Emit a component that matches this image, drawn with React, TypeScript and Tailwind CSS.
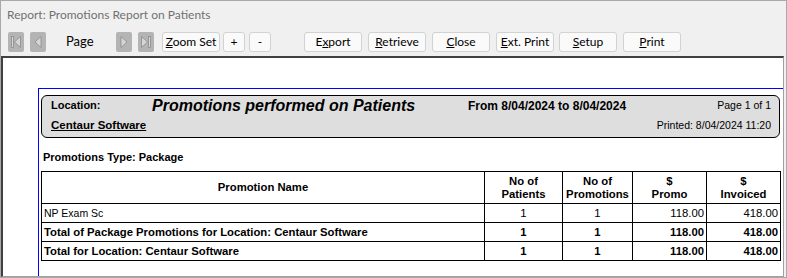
import React from "react";

type NavKind = "first" | "prev" | "next" | "last";

const NavButton = ({ kind }: { kind: NavKind }) => {
  return (
    <svg width="16" height="20" viewBox="0 0 16 20" className="block">
      <rect x="0" y="0" width="16" height="20" rx="2" fill="#b4b4b4" />
      {kind === "first" && (
        <g fill="#d6d6d6" stroke="#8c8c8c" strokeWidth="0.8">
          <rect x="3.5" y="4.5" width="2" height="11" />
          <path d="M12.5 4.5 L6.5 10 L12.5 15.5 Z" />
        </g>
      )}
      {kind === "prev" && (
        <g fill="#d6d6d6" stroke="#8c8c8c" strokeWidth="0.8">
          <path d="M11 4.5 L5 10 L11 15.5 Z" />
        </g>
      )}
      {kind === "next" && (
        <g fill="#d6d6d6" stroke="#8c8c8c" strokeWidth="0.8">
          <path d="M5 4.5 L11 10 L5 15.5 Z" />
        </g>
      )}
      {kind === "last" && (
        <g fill="#d6d6d6" stroke="#8c8c8c" strokeWidth="0.8">
          <path d="M3.5 4.5 L9.5 10 L3.5 15.5 Z" />
          <rect x="10.5" y="4.5" width="2" height="11" />
        </g>
      )}
    </svg>
  );
};

const ToolButton = ({
  className,
  children,
}: {
  className: string;
  children: React.ReactNode;
}) => (
  <div
    className={
      "h-[20px] rounded-[3px] border border-[#d2d2d2] bg-[#fafafa] flex items-center justify-center text-[12px] leading-none text-black " +
      className
    }
  >
    {children}
  </div>
);

const rows = [
  { name: "NP Exam Sc", patients: "1", promos: "1", promo: "118.00", invoiced: "418.00", bold: false },
  {
    name: "Total of Package Promotions for Location: Centaur Software",
    patients: "1",
    promos: "1",
    promo: "118.00",
    invoiced: "418.00",
    bold: true,
  },
  { name: "Total for Location: Centaur Software", patients: "1", promos: "1", promo: "118.00", invoiced: "418.00", bold: true },
];

export default function App() {
  return (
    <div className="w-[787px] h-[278px] bg-[#f0f0f0] border border-[#a9a9a9] flex flex-col overflow-hidden font-['Lato',sans-serif]">
      {/* title bar */}
      <div className="h-[27px] flex items-center pl-[6px] text-[12px] text-[#707070]">
        Report: Promotions Report on Patients
      </div>

      {/* toolbar */}
      <div className="h-[28px] flex items-start pt-[4px] pl-[7px]">
        <NavButton kind="first" />
        <div className="ml-[6px]">
          <NavButton kind="prev" />
        </div>
        <div className="w-[70px] pl-[20px] text-[13px] leading-[18px] text-black">Page</div>
        <NavButton kind="next" />
        <div className="ml-[6px]">
          <NavButton kind="last" />
        </div>
        <ToolButton className="w-[58px] ml-[8px]">
          <span>
            <u>Z</u>oom Set
          </span>
        </ToolButton>
        <ToolButton className="w-[22px] ml-[3px]">+</ToolButton>
        <ToolButton className="w-[22px] ml-[4px]">-</ToolButton>
        <ToolButton className="w-[58px] ml-[33px]">
          <span>
            E<u>x</u>port
          </span>
        </ToolButton>
        <ToolButton className="w-[58px] ml-[6px]">
          <span>
            <u>R</u>etrieve
          </span>
        </ToolButton>
        <ToolButton className="w-[58px] ml-[6px]">
          <span>
            <u>C</u>lose
          </span>
        </ToolButton>
        <ToolButton className="w-[58px] ml-[6px]">
          <span>
            <u>E</u>xt. Print
          </span>
        </ToolButton>
        <ToolButton className="w-[58px] ml-[5px]">
          <span>
            <u>S</u>etup
          </span>
        </ToolButton>
        <ToolButton className="w-[58px] ml-[6px]">
          <span>
            <u>P</u>rint
          </span>
        </ToolButton>
      </div>

      {/* report canvas */}
      <div className="flex-1 mr-[2px] bg-white border-t-2 border-l-2 border-t-[#404040] border-l-[#404040] border-r border-b border-r-[#a0a0a0] border-b-[#a0a0a0] flex flex-col font-['Liberation_Sans',Arial,sans-serif] text-black">
        <div className="flex-1 ml-[35px] mt-[30px] border-l border-t border-[#0000ff] flex flex-col">
          {/* page header */}
          <div className="ml-[2px] mt-[6px] w-[739px] h-[43px] bg-[#dedede] border border-black rounded-[6px] flex flex-col pl-[9px] pr-[8px]">
            <div className="h-[19px] flex items-center">
              <div className="w-[101px] text-[11px] font-bold">Location:</div>
              <div className="w-[316px] text-[16px] font-bold italic leading-none">
                Promotions performed on Patients
              </div>
              <div className="text-[12px] font-bold">From 8/04/2024 to 8/04/2024</div>
              <div className="ml-auto text-[10.5px]">Page 1 of 1</div>
            </div>
            <div className="h-[21px] flex items-center">
              <div className="text-[11.5px] font-bold underline">Centaur Software</div>
              <div className="ml-auto text-[10.5px]">Printed: 8/04/2024 11:20</div>
            </div>
          </div>

          <div className="h-[33px] pl-[4px] pt-[12px] text-[11px] leading-[14px] font-bold">
            Promotions Type: Package
          </div>

          <table className="ml-[2px] w-[739px] table-fixed border-collapse text-[11.3px]">
            <colgroup>
              <col className="w-[443px]" />
              <col className="w-[78px]" />
              <col className="w-[70px]" />
              <col className="w-[74px]" />
              <col className="w-[74px]" />
            </colgroup>
            <thead>
              <tr className="h-[32px] font-bold leading-[13px]">
                <th className="border border-black text-center">Promotion Name</th>
                <th className="border border-black text-center">
                  No of
                  <br />
                  Patients
                </th>
                <th className="border border-black text-center">
                  No of
                  <br />
                  Promotions
                </th>
                <th className="border border-black text-center">
                  $
                  <br />
                  Promo
                </th>
                <th className="border border-black text-center">
                  $
                  <br />
                  Invoiced
                </th>
              </tr>
            </thead>
            <tbody>
              {rows.map((r) => (
                <tr key={r.name} className={"h-[19px] leading-[14px] " + (r.bold ? "font-bold" : "")}>
                  <td className={"border border-black pl-[2px] " + (r.bold ? "" : "text-[10.5px]")}>{r.name}</td>
                  <td className="border border-black text-center">{r.patients}</td>
                  <td className="border border-black text-center">{r.promos}</td>
                  <td className="border border-black text-right pr-[2px]">{r.promo}</td>
                  <td className="border border-black text-right pr-[2px]">{r.invoiced}</td>
                </tr>
              ))}
            </tbody>
          </table>
        </div>
      </div>
    </div>
  );
}
